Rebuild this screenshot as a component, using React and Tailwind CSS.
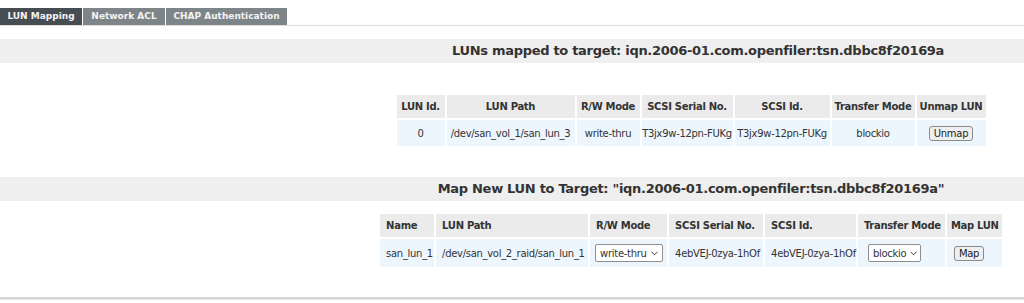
const TABS = [
  { label: 'LUN Mapping', active: true, w: 'w-[82px]' },
  { label: 'Network ACL', active: false, w: 'w-[82px]' },
  { label: 'CHAP Authentication', active: false, w: 'w-[121px]' },
]

const TARGET = 'iqn.2006-01.com.openfiler:tsn.dbbc8f20169a'

function Select({ value, w }) {
  return (
    <div className={`inline-flex items-center justify-between h-[18px] border border-[#8f8f8f] bg-white rounded-[2px] pl-[4px] pr-[6px] whitespace-nowrap ${w}`}>
      <span>{value}</span>
      <svg width="7" height="5" viewBox="0 0 7 5" className="ml-1 shrink-0">
        <path d="M0.5 0.8 L3.5 3.8 L6.5 0.8" fill="none" stroke="#444" strokeWidth="1" />
      </svg>
    </div>
  )
}

function Button({ children }) {
  return (
    <span className="inline-block px-[4px] h-[15px] leading-[13px] border border-[#8a8a8a] rounded-[3px] bg-[#efefef] text-[#222]">
      {children}
    </span>
  )
}

function SectionTitle({ children, pad }) {
  return (
    <div className="bg-[#efefef] h-[24px] flex items-center">
      <div className={`flex-1 text-center text-[13px] tracking-[-0.3px] font-bold text-[#333] whitespace-nowrap ${pad}`}>{children}</div>
    </div>
  )
}

export default function App() {
  return (
    <div className="w-[1024px] h-[303px] bg-white text-[#333] font-['DejaVu_Sans',Verdana,sans-serif] text-[10px] tracking-[-0.3px] overflow-hidden">
      {/* Tabs */}
      <div className="pt-[8px] flex items-end border-b border-[#dcdcdc]">
        {TABS.map(t => (
          <div
            key={t.label}
            className={`${t.w} h-[17px] mr-px flex items-center justify-center text-[9px] tracking-normal font-bold text-[#f4f4f4] whitespace-nowrap ${t.active ? 'bg-[#454c52]' : 'bg-[#7e8589]'}`}
          >
            {t.label}
          </div>
        ))}
      </div>

      <div className="mt-[13px]">
        <SectionTitle pad="pl-[372px]">LUNs mapped to target: {TARGET}</SectionTitle>
      </div>

      <div className="flex pl-[358px] mt-[30px]">
        <div className="flex-1 flex justify-center">
          <table className="border-separate border-spacing-[2px] whitespace-nowrap">
            <thead>
              <tr className="bg-[#ebebeb] h-[23px] font-bold text-center">
                <th className="w-[48px]">LUN Id.</th>
                <th className="w-[128px]">LUN Path</th>
                <th className="w-[63px]">R/W Mode</th>
                <th className="w-[91px]">SCSI Serial No.</th>
                <th className="w-[95px]">SCSI Id.</th>
                <th className="w-[83px]">Transfer Mode</th>
                <th className="w-[69px]">Unmap LUN</th>
              </tr>
            </thead>
            <tbody>
              <tr className="bg-[#edf5fd] h-[26px] text-center">
                <td>0</td>
                <td>/dev/san_vol_1/san_lun_3</td>
                <td>write-thru</td>
                <td>T3jx9w-12pn-FUKg</td>
                <td>T3jx9w-12pn-FUKg</td>
                <td>blockio</td>
                <td><Button>Unmap</Button></td>
              </tr>
            </tbody>
          </table>
        </div>
      </div>

      <div className="mt-[29px]">
        <SectionTitle pad="pl-[358px]">Map New LUN to Target: "{TARGET}"</SectionTitle>
      </div>

      <div className="flex pl-[358px] mt-[11px]">
        <div className="flex-1 flex justify-center">
          <table className="border-separate border-spacing-[2px] whitespace-nowrap">
            <thead>
              <tr className="bg-[#ebebeb] h-[23px] font-bold text-left">
                <th className="w-[54px] pl-[6px]">Name</th>
                <th className="w-[152px] pl-[6px]">LUN Path</th>
                <th className="w-[77px] pl-[6px]">R/W Mode</th>
                <th className="w-[94px] pl-[6px]">SCSI Serial No.</th>
                <th className="w-[86px] pl-[6px]">SCSI Id.</th>
                <th className="w-[87px] pl-[6px]">Transfer Mode</th>
                <th className="w-[55px] pl-[4px]">Map LUN</th>
              </tr>
            </thead>
            <tbody>
              <tr className="bg-[#edf5fd] h-[28px] text-left">
                <td className="pl-[6px]">san_lun_1</td>
                <td className="pl-[6px]">/dev/san_vol_2_raid/san_lun_1</td>
                <td className="pl-[5px]"><Select value="write-thru" w="w-[68px]" /></td>
                <td className="pl-[6px]">4ebVEJ-0zya-1hOf</td>
                <td className="pl-[6px]">4ebVEJ-0zya-1hOf</td>
                <td className="pl-[10px]"><Select value="blockio" w="w-[53px]" /></td>
                <td className="pl-[7px]"><Button>Map</Button></td>
              </tr>
            </tbody>
          </table>
        </div>
      </div>

      <div className="mt-[28px] border-t-2 border-[#d4d4d4] border-b border-b-[#e8e8e8] h-[3px]" />
    </div>
  )
}
